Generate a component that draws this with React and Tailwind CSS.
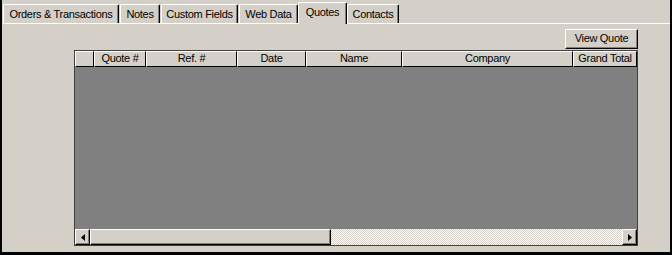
import React from "react";

const tabs = [
  { label: "Orders & Transactions", cls: "ml-px w-[116px]" },
  { label: "Notes", cls: "ml-px w-[40px]" },
  { label: "Custom Fields", cls: "ml-px w-[77px]" },
  { label: "Web Data", cls: "ml-px w-[59px]" },
  { label: "Quotes", cls: "w-[49px]", active: true },
  { label: "Contacts", cls: "w-[52px]" },
];

const cols = [
  { label: "", w: "w-[19px]" },
  { label: "Quote #", w: "w-[52px]" },
  { label: "Ref. #", w: "w-[91px]" },
  { label: "Date", w: "w-[69px]" },
  { label: "Name", w: "w-[96px]" },
  { label: "Company", w: "w-[171px]" },
  { label: "Grand Total", w: "flex-1" },
];

const raised =
  "bg-[#d4d0c8] border border-t-white border-l-white border-r-black border-b-black shadow-[inset_-1px_-1px_#808080]";

export default function App() {
  return (
    <div className="w-[672px] h-[255px] bg-[#d4d0c8] border-l-2 border-r-2 border-b-[3px] border-black flex flex-col text-[11px] leading-[13px] tracking-[-0.3px] text-black [font-family:'Liberation_Sans',Arial,sans-serif]">
      <div className="h-[24px] flex items-end border-b border-white">
        {tabs.map((t) =>
          t.active ? (
            <div
              key={t.label}
              className={`${t.cls} relative -mb-px h-[22px] bg-[#d4d0c8] border-t border-l border-r border-t-white border-l-white border-r-black shadow-[inset_-1px_0_#808080] rounded-t-[2px] pt-[3px] text-center whitespace-nowrap`}
            >
              {t.label}
            </div>
          ) : (
            <div
              key={t.label}
              className={`${t.cls} h-[19px] bg-[#d4d0c8] border-t border-l border-r border-t-white border-l-white border-r-black shadow-[inset_-1px_0_#808080] rounded-t-[2px] pt-[3px] text-center whitespace-nowrap`}
            >
              {t.label}
            </div>
          )
        )}
      </div>

      <div className="flex-1 flex flex-col ml-[72px] w-[564px]">
        <button
          className={`${raised} self-end mt-[5px] h-[20px] w-[73px] flex items-center justify-center p-0 pb-px`}
        >
          View Quote
        </button>

        <div className="mt-px h-[196px] flex flex-col border border-[#404040]">
          <div className="h-[16px] flex">
            {cols.map((c, i) => (
              <div
                key={i}
                className={`${c.w} h-full border-t border-l border-t-white border-l-white border-r border-b border-r-black border-b-black bg-[#d4d0c8] flex items-center justify-center whitespace-nowrap overflow-hidden pb-px`}
              >
                {c.label}
              </div>
            ))}
          </div>
          <div className="flex-1 bg-[#808080]" />
          <div className="h-[16px] flex">
            <div className={`${raised} w-[15px] h-full flex items-center justify-center`}>
              <svg width="4" height="7" viewBox="0 0 4 7">
                <path d="M4 0 L0 3.5 L4 7 Z" fill="#000" />
              </svg>
            </div>
            <div className={`${raised} w-[241px] h-full`} />
            <div className="flex-1 h-full bg-[repeating-conic-gradient(#ffffff_0_25%,#d4d0c8_0_50%)] bg-[length:2px_2px]" />
            <div className={`${raised} w-[15px] h-full flex items-center justify-center`}>
              <svg width="4" height="7" viewBox="0 0 4 7">
                <path d="M0 0 L4 3.5 L0 7 Z" fill="#000" />
              </svg>
            </div>
          </div>
        </div>
      </div>
    </div>
  );
}
